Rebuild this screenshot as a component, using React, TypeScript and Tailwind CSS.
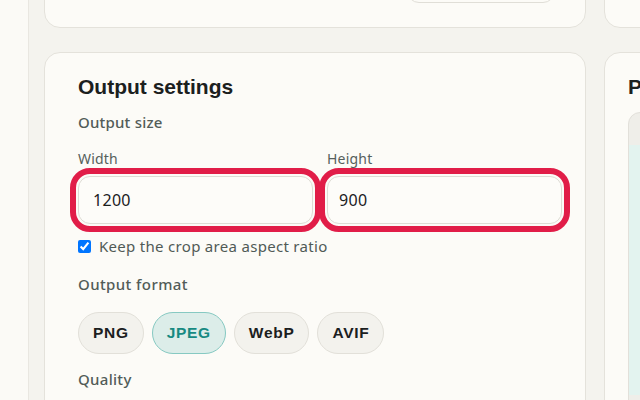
const formats = ["PNG", "JPEG", "WebP", "AVIF"];

const App = () => {
  return (
    <div
      className="flex h-[400px] w-[640px] overflow-hidden bg-[#f4f3ee] text-[#1b201e]"
      style={{ fontFamily: '"Noto Sans", "Liberation Sans", sans-serif' }}
    >
      {/* Sidebar edge */}
      <aside className="w-[29px] shrink-0 border-r border-[#e9e7e1] bg-[#fbfaf6]" />

      {/* Main columns */}
      <main className="flex shrink-0 items-start gap-[18px] pl-[15px]">
        {/* Left column */}
        <div className="-mt-[53px] flex w-[542px] shrink-0 flex-col gap-6">
          <section className="flex h-[81px] shrink-0 items-end justify-end rounded-2xl border border-[#e4e2db] bg-[#fcfbf7] pb-[24px] pr-[30px]">
            <button className="h-[40px] w-[148px] rounded-xl border border-[#e0ded7] bg-[#fcfbf7]" />
          </section>

          <section className="h-[400px] shrink-0 rounded-2xl border border-[#e4e2db] bg-[#fcfbf7] pl-[33px] pr-[23px] pt-[20px]">
            <h2
              className="text-[21px] font-bold leading-[28px]"
              style={{ fontFamily: '"Liberation Sans", Arial, sans-serif' }}
            >
              Output settings
            </h2>
            <p className="mt-[10px] text-[15px] font-medium leading-[22px] tracking-[0.2px] text-[#525c58]">
              Output size
            </p>

            <div className="mt-[16px] grid grid-cols-2 gap-[14px]">
              <label className="flex flex-col gap-[7px]">
                <span className="text-[14px] leading-[20px] tracking-[0.2px] text-[#56605c]">Width</span>
                <input
                  defaultValue="1200"
                  className="h-[48px] rounded-xl border border-[#dedcd5] bg-[#fdfcf9] px-[14px] text-[16px] tracking-[0.3px] text-[#1b201e] outline-[6px] outline-offset-[2px] outline-[#e11d48] outline-solid"
                />
              </label>
              <label className="flex flex-col gap-[7px]">
                <span className="text-[14px] leading-[20px] tracking-[0.2px] text-[#56605c]">Height</span>
                <input
                  defaultValue="900"
                  className="h-[48px] rounded-xl border border-[#dedcd5] bg-[#fdfcf9] px-[11px] text-[16px] tracking-[0.3px] text-[#1b201e] outline-[6px] outline-offset-[2px] outline-[#e11d48] outline-solid"
                />
              </label>
            </div>

            <label className="mt-[12px] flex items-center gap-[8px] text-[15px] leading-[20px] tracking-[0.3px] text-[#505a56]">
              <input type="checkbox" defaultChecked className="m-0 h-[13px] w-[13px]" />
              Keep the crop area aspect ratio
            </label>

            <p className="mt-[17px] text-[15px] font-medium leading-[22px] tracking-[0.4px] text-[#525c58]">
              Output format
            </p>
            <div
              className="mt-[17px] flex gap-[8px]"
              style={{ fontFamily: '"Liberation Sans", Arial, sans-serif' }}
            >
              {formats.map((f) =>
                f === "JPEG" ? (
                  <button
                    key={f}
                    className="h-[42px] rounded-full border border-[#86c9c2] bg-[#dcede9] px-[14px] text-[15.5px] font-bold tracking-[0.7px] text-[#178a82]"
                  >
                    {f}
                  </button>
                ) : (
                  <button
                    key={f}
                    className="h-[42px] rounded-full border border-[#e2e0d9] bg-[#f3f2ed] px-[14px] text-[15.5px] font-bold tracking-[0.7px] text-[#1b201e]"
                  >
                    {f}
                  </button>
                )
              )}
            </div>

            <p className="mt-[14px] text-[15px] font-medium leading-[22px] tracking-[0.3px] text-[#525c58]">
              Quality
            </p>
          </section>
        </div>

        {/* Right column */}
        <div className="-mt-[53px] flex w-[400px] shrink-0 flex-col gap-6">
          <section className="h-[81px] shrink-0 rounded-2xl border border-[#e4e2db] bg-[#fcfbf7]" />
          <section className="h-[400px] shrink-0 rounded-2xl border border-[#e4e2db] bg-[#fcfbf7] px-[23px] pt-[20px]">
            <h2
              className="text-[21px] font-bold leading-[28px]"
              style={{ fontFamily: '"Liberation Sans", Arial, sans-serif' }}
            >
              Preview
            </h2>
            <div className="mt-[11px] flex h-[300px] flex-col overflow-hidden rounded-xl border border-[#e2e0da] bg-[#efeee9]">
              <div className="mt-[32px] h-[250px] bg-[#e3f3ef]" />
            </div>
          </section>
        </div>
      </main>
    </div>
  );
};

export default App;
